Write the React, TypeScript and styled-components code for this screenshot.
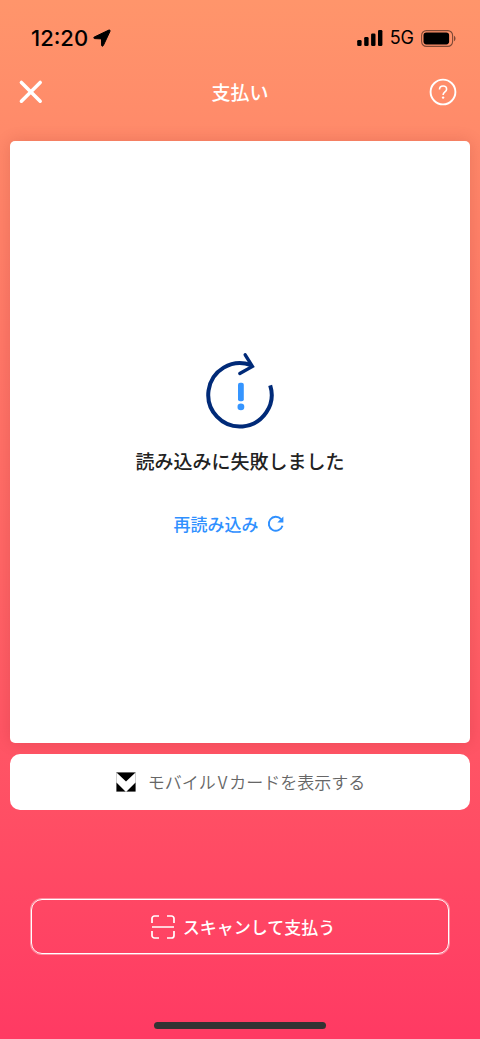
import React from "react";
import styled, { createGlobalStyle } from "styled-components";

const GlobalStyle = createGlobalStyle`
  *, *::before, *::after { box-sizing: border-box; }
  body {
    margin: 0;
    font-family: "Noto Sans CJK JP", sans-serif;
    -webkit-font-smoothing: antialiased;
  }
  button { font-family: inherit; cursor: pointer; }
  svg { display: block; flex: none; }
`;

const Screen = styled.div`
  display: flex;
  flex-direction: column;
  min-height: 100vh;
  background: linear-gradient(180deg, #ff956b 0%, #ff6666 54%, #ff3a63 100%);
`;

const StatusBar = styled.div`
  display: flex;
  align-items: center;
  justify-content: space-between;
  height: 60px;
  padding: 16px 24px 0 31px;
  color: #000;
  font-family: Inter, sans-serif;
`;

const StatusGroup = styled.div<{ $gap: number }>`
  display: flex;
  align-items: center;
  gap: ${({ $gap }) => $gap}px;
`;

const Clock = styled.time`
  font-size: 22px;
  font-weight: 500;
  line-height: 28px;
`;

const Network = styled.span`
  font-size: 18px;
  font-weight: 400;
  line-height: 28px;
`;

const Header = styled.header`
  display: grid;
  grid-template-columns: 28px 1fr 28px;
  align-items: center;
  height: 64px;
  padding: 0 23px 0 17px;
`;

const Title = styled.h1`
  margin: 0;
  padding-left: 6px;
  color: #fff;
  font-size: 19px;
  font-weight: 500;
  line-height: 28px;
  text-align: center;
`;

const IconButton = styled.button`
  width: 28px;
  height: 28px;
  padding: 0;
  border: 0;
  background: none;
  color: #fff;
`;

const Main = styled.main`
  display: flex;
  flex: 1;
  flex-direction: column;
  gap: 11px;
  padding: 17px 10px 0;
`;

const CodePanel = styled.section`
  display: flex;
  flex: 1;
  flex-direction: column;
  align-items: center;
  justify-content: center;
  min-height: 360px;
  padding-top: 4px;
  border-radius: 5px;
  background: #fff;
  box-shadow: 0 0 16px rgba(120, 20, 20, 0.16);
`;

const Message = styled.p`
  margin: 17px 0 0;
  color: #222;
  font-size: 19px;
  font-weight: 500;
  line-height: 28px;
`;

const ReloadButton = styled.button`
  display: flex;
  align-items: center;
  gap: 8px;
  margin-top: 37px;
  padding: 0 22px 0 0;
  border: 0;
  background: none;
  color: #2f90ff;
  font-size: 17px;
  font-weight: 500;
  line-height: 24px;
`;

const CardButton = styled.button`
  display: flex;
  align-items: center;
  justify-content: center;
  gap: 12px;
  height: 56px;
  padding: 0 0 0 1px;
  border: 0;
  border-radius: 10px;
  background: #fff;
  color: #666;
  font-size: 17px;
  font-weight: 350;
  line-height: 24px;
`;

const BrandLetter = styled.span`
  margin: 0 2px;
`;

const Footer = styled.footer`
  display: flex;
  flex-direction: column;
  align-items: center;
  padding: 89px 0 10px;
`;

const ScanButton = styled.button`
  display: flex;
  align-items: center;
  justify-content: center;
  gap: 8px;
  width: calc(100% - 62px);
  height: 55px;
  padding: 0 0 0 6px;
  border: 1px solid #fff;
  border-radius: 11px;
  background: none;
  box-shadow: 0 0 0 1px rgba(255, 255, 255, 0.4);
  color: #fff;
  font-size: 17px;
  font-weight: 500;
  line-height: 24px;
`;

const HomeIndicator = styled.div`
  width: 36%;
  height: 7px;
  margin-top: 68px;
  border-radius: 4px;
  background: #333;
`;

function LocationIcon() {
  return (
    <svg width="18" height="18" viewBox="0 0 18 18" aria-hidden="true">
      <path
        d="M1.3 8 15.8 1.1c.9-.4 1.6.3 1.2 1.2L10.3 16.6c-.5.9-1.7.7-1.7-.3L8.5 9.9 1.7 9.6C.6 9.5.4 8.4 1.3 8Z"
        fill="#000"
        stroke="#000"
        strokeWidth="1"
        strokeLinejoin="round"
      />
    </svg>
  );
}

function SignalIcon() {
  return (
    <svg width="26" height="16" viewBox="0 0 26 16" aria-hidden="true">
      <rect x="0.2" y="10" width="4.4" height="6" rx="1.3" />
      <rect x="7.2" y="7" width="4.4" height="9" rx="1.3" />
      <rect x="14.1" y="3.5" width="4.4" height="12.5" rx="1.3" />
      <rect x="21" y="0" width="4.4" height="16" rx="1.3" />
    </svg>
  );
}

function BatteryIcon() {
  return (
    <svg width="35" height="17" viewBox="0 0 35 17" aria-hidden="true">
      <rect x="0.6" y="0.6" width="31" height="15.8" rx="4.8" fill="none" stroke="#000" strokeOpacity="0.5" strokeWidth="1.1" />
      <rect x="2.5" y="2.6" width="25.6" height="11.8" rx="2.8" />
      <path d="M33 5.8c2 1 2 4.4 0 5.4Z" fillOpacity="0.5" />
    </svg>
  );
}

function CloseIcon() {
  return (
    <svg width="28" height="28" viewBox="0 0 28 28" aria-hidden="true">
      <path d="m4.4 4.4 18.8 18.8M23.2 4.4 4.4 23.2" stroke="#fff" strokeWidth="3.5" strokeLinecap="round" />
    </svg>
  );
}

function HelpIcon() {
  return (
    <svg width="28" height="28" viewBox="0 0 28 28" fill="none" aria-hidden="true">
      <circle cx="14" cy="14" r="12.4" stroke="#fff" strokeWidth="1.9" />
      <path
        d="M10.5 11.5c0-2.1 1.5-3.5 3.6-3.5s3.5 1.3 3.5 3.2c0 2.7-3.5 2.8-3.5 5.8"
        stroke="#fff"
        strokeWidth="1.6"
      />
      <circle cx="14.1" cy="19.6" r="1.2" fill="#fff" />
    </svg>
  );
}

function LoadErrorIcon() {
  return (
    <svg width="70" height="78" viewBox="0 0 70 78" fill="none" aria-hidden="true">
      <path d="M46 13.1A31.7 31.7 0 1 0 65.2 33.3" stroke="#002a78" strokeWidth="4" />
      <path d="m40.2 2.8 7.2 11.6-12.6 7.1" stroke="#002a78" strokeWidth="3.4" strokeLinecap="round" />
      <rect x="33" y="30.8" width="5.8" height="18.4" rx="2" fill="#3595ff" />
      <ellipse cx="35.9" cy="54.9" rx="3.4" ry="3.3" fill="#3595ff" />
    </svg>
  );
}

function ReloadIcon() {
  return (
    <svg width="18" height="18" viewBox="0 0 18 18" fill="none" aria-hidden="true">
      <path d="M14 4.1A7 7 0 1 0 15.5 10.8" stroke="#2f90ff" strokeWidth="1.9" />
      <path d="M16.4 1.5v6.1h-6.1Z" fill="#2f90ff" />
    </svg>
  );
}

function VCardIcon() {
  return (
    <svg width="20" height="20" viewBox="0 0 20 20" aria-hidden="true">
      <rect x="0.5" y="0.5" width="19" height="19" fill="#fff" stroke="#bbb" strokeWidth="0.7" />
      <path d="M.5.5h19L10 9.5ZM.5 10.5l9 9h-9ZM19.5 10.5v9h-9Z" fill="#000" />
    </svg>
  );
}

function ScanIcon() {
  return (
    <svg width="24" height="24" viewBox="0 0 24 24" fill="none" stroke="#fff" strokeWidth="1.7" aria-hidden="true">
      <path d="M1 8V3.5A2.5 2.5 0 0 1 3.5 1H8M16 1h4.5A2.5 2.5 0 0 1 23 3.5V8M23 16v4.5A2.5 2.5 0 0 1 20.5 23H16M8 23H3.5A2.5 2.5 0 0 1 1 20.5V16M1 12h22" />
    </svg>
  );
}

export default function App() {
  return (
    <Screen>
      <GlobalStyle />
      <StatusBar>
        <StatusGroup $gap={5}>
          <Clock>12:20</Clock>
          <LocationIcon />
        </StatusGroup>
        <StatusGroup $gap={7}>
          <SignalIcon />
          <Network>5G</Network>
          <BatteryIcon />
        </StatusGroup>
      </StatusBar>
      <Header>
        <IconButton type="button" aria-label="閉じる">
          <CloseIcon />
        </IconButton>
        <Title>支払い</Title>
        <IconButton type="button" aria-label="ヘルプ">
          <HelpIcon />
        </IconButton>
      </Header>
      <Main>
        <CodePanel>
          <LoadErrorIcon />
          <Message>読み込みに失敗しました</Message>
          <ReloadButton type="button">
            再読み込み
            <ReloadIcon />
          </ReloadButton>
        </CodePanel>
        <CardButton type="button">
          <VCardIcon />
          <span>
            モバイル<BrandLetter>V</BrandLetter>カードを表示する
          </span>
        </CardButton>
      </Main>
      <Footer>
        <ScanButton type="button">
          <ScanIcon />
          スキャンして支払う
        </ScanButton>
        <HomeIndicator />
      </Footer>
    </Screen>
  );
}
